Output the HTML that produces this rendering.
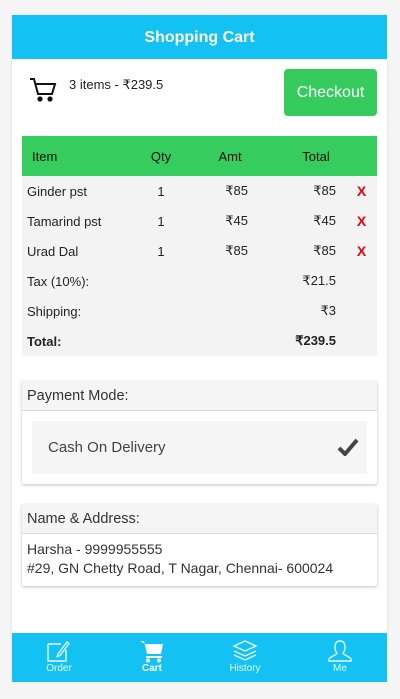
<!DOCTYPE html>
<html><head><meta charset="utf-8"><style>
*{box-sizing:border-box;margin:0;padding:0}
body{width:400px;height:699px;background:#f5f5f5;font-family:"Liberation Sans",sans-serif;color:#222;position:relative;overflow:hidden}
.card{position:absolute;left:12px;top:15px;width:375px;height:667px;background:#fff;box-shadow:0 0 3px rgba(0,0,0,.1)}
.hdr{height:44px;background:#13c2f3;color:#fff;font-weight:bold;font-size:16px;text-align:center;line-height:46px}
.abs{position:absolute}
.btn{left:272px;top:54px;width:93px;height:47px;background:#35cb5d;border-radius:4px;color:#fff;font-size:16px;text-align:center;line-height:48px}
table{position:absolute;left:10px;top:121px;width:355px;border-collapse:collapse;font-size:13px;table-layout:fixed}
th{background:#37cc5e;height:40px;font-weight:normal;color:#111;text-align:left}
td{background:#f3f3f3;height:30px}
.r{text-align:right;padding-right:10px}
.x{color:#e8000b;font-weight:bold;font-size:14px}
.box{position:absolute;left:10px;width:355px;background:#fff;box-shadow:0 1px 3px rgba(0,0,0,.25);border-radius:2px}
.bh{background:#f5f5f5;border-bottom:1px solid #ddd;height:30px;line-height:31px;padding-left:5px;font-size:14.5px;color:#333}
.nav{position:absolute;left:0;top:618px;width:375px;height:49px;background:#13c2f3}
.ni{position:absolute;top:0;width:60px;text-align:center;color:#e6f8ff;font-size:10px}
.ni svg{display:block;margin:6px auto 0}
</style></head><body>
<div class="card">
<div class="hdr">Shopping Cart</div>
<svg class="abs" style="left:17px;top:62px" width="28" height="26" viewBox="0 0 28 26" fill="none" stroke="#111" stroke-width="2"><path d="M1 2h4l4 15h14l3-10H7"/><circle cx="11" cy="22" r="1.6" fill="#111"/><circle cx="21" cy="22" r="1.6" fill="#111"/></svg>
<div class="abs" style="left:57px;top:62px;font-size:13px">3 items - ₹239.5</div>
<div class="abs btn">Checkout</div>
<table>
<colgroup><col style="width:108px"><col style="width:62px"><col style="width:66px"><col style="width:88px"><col></colgroup>
<tr><th style="padding-left:10px">Item</th><th style="text-align:center">Qty</th><th style="text-align:center;padding-left:10px">Amt</th><th style="text-align:center;padding-left:28px">Total</th><th></th></tr>
<tr><td style="padding-left:5px">Ginder pst</td><td align="center">1</td><td class="r">₹85</td><td class="r">₹85</td><td class="x" align="center">X</td></tr>
<tr><td style="padding-left:5px">Tamarind pst</td><td align="center">1</td><td class="r">₹45</td><td class="r">₹45</td><td class="x" align="center">X</td></tr>
<tr><td style="padding-left:5px">Urad Dal</td><td align="center">1</td><td class="r">₹85</td><td class="r">₹85</td><td class="x" align="center">X</td></tr>
<tr><td style="padding-left:5px">Tax (10%):</td><td></td><td></td><td class="r">₹21.5</td><td></td></tr>
<tr><td style="padding-left:5px">Shipping:</td><td></td><td></td><td class="r">₹3</td><td></td></tr>
<tr><td style="padding-left:5px;font-weight:bold">Total:</td><td></td><td></td><td class="r" style="font-weight:bold">₹239.5</td><td></td></tr>
</table>
<div class="box" style="top:366px;height:103px"><div class="bh">Payment Mode:</div>
<div class="abs" style="left:10px;top:40px;width:335px;height:53px;background:#f5f5f5;font-size:15px;color:#444;line-height:54px;padding-left:16px">Cash On Delivery
<svg class="abs" style="right:8px;top:17px" width="22" height="18" viewBox="0 0 22 18"><path d="M2 10l6 6L20 2" stroke="#444" stroke-width="4" fill="none"/></svg></div></div>
<div class="box" style="top:489px;height:82px"><div class="bh">Name &amp; Address:</div>
<div style="padding:6px 5px;font-size:14px;color:#333;line-height:19px">Harsha - 9999955555<br>#29, GN Chetty Road, T Nagar, Chennai- 600024</div></div>
<div class="nav">
<div class="ni" style="left:17px"><svg width="26" height="24" viewBox="0 0 26 24" fill="none" stroke="#e6f8ff" stroke-width="1.4"><path d="M2 5h13M2 5v17h18V11"/><path d="M12 15l9-12 2 1.5-9 12-3 1z"/></svg>Order</div>
<div class="ni" style="left:110px;color:#fff;font-weight:bold"><svg width="26" height="24" viewBox="0 0 26 24"><path d="M1 2h4l3 13h14l2-10H6z" fill="#fff"/><rect x="7" y="17" width="16" height="2" fill="#fff"/><circle cx="9" cy="21.5" r="2" fill="#fff"/><circle cx="20" cy="21.5" r="2" fill="#fff"/></svg>Cart</div>
<div class="ni" style="left:203px"><svg width="26" height="24" viewBox="0 0 26 24" fill="none" stroke="#e6f8ff" stroke-width="1.4"><path d="M13 2l11 5-11 5-11-5z"/><path d="M2 12l11 5 11-5M2 16l11 5 11-5"/></svg>History</div>
<div class="ni" style="left:298px"><svg width="26" height="24" viewBox="0 0 26 24" fill="none" stroke="#e6f8ff" stroke-width="1.4"><path d="M13 2c-4 0-5 3-5 6s1 5 2 6c0 2-6 3-8 6v2h22v-2c-2-3-8-4-8-6 1-1 2-3 2-6s-1-6-5-6z"/></svg>Me</div>
</div>
</div>
</body></html>
